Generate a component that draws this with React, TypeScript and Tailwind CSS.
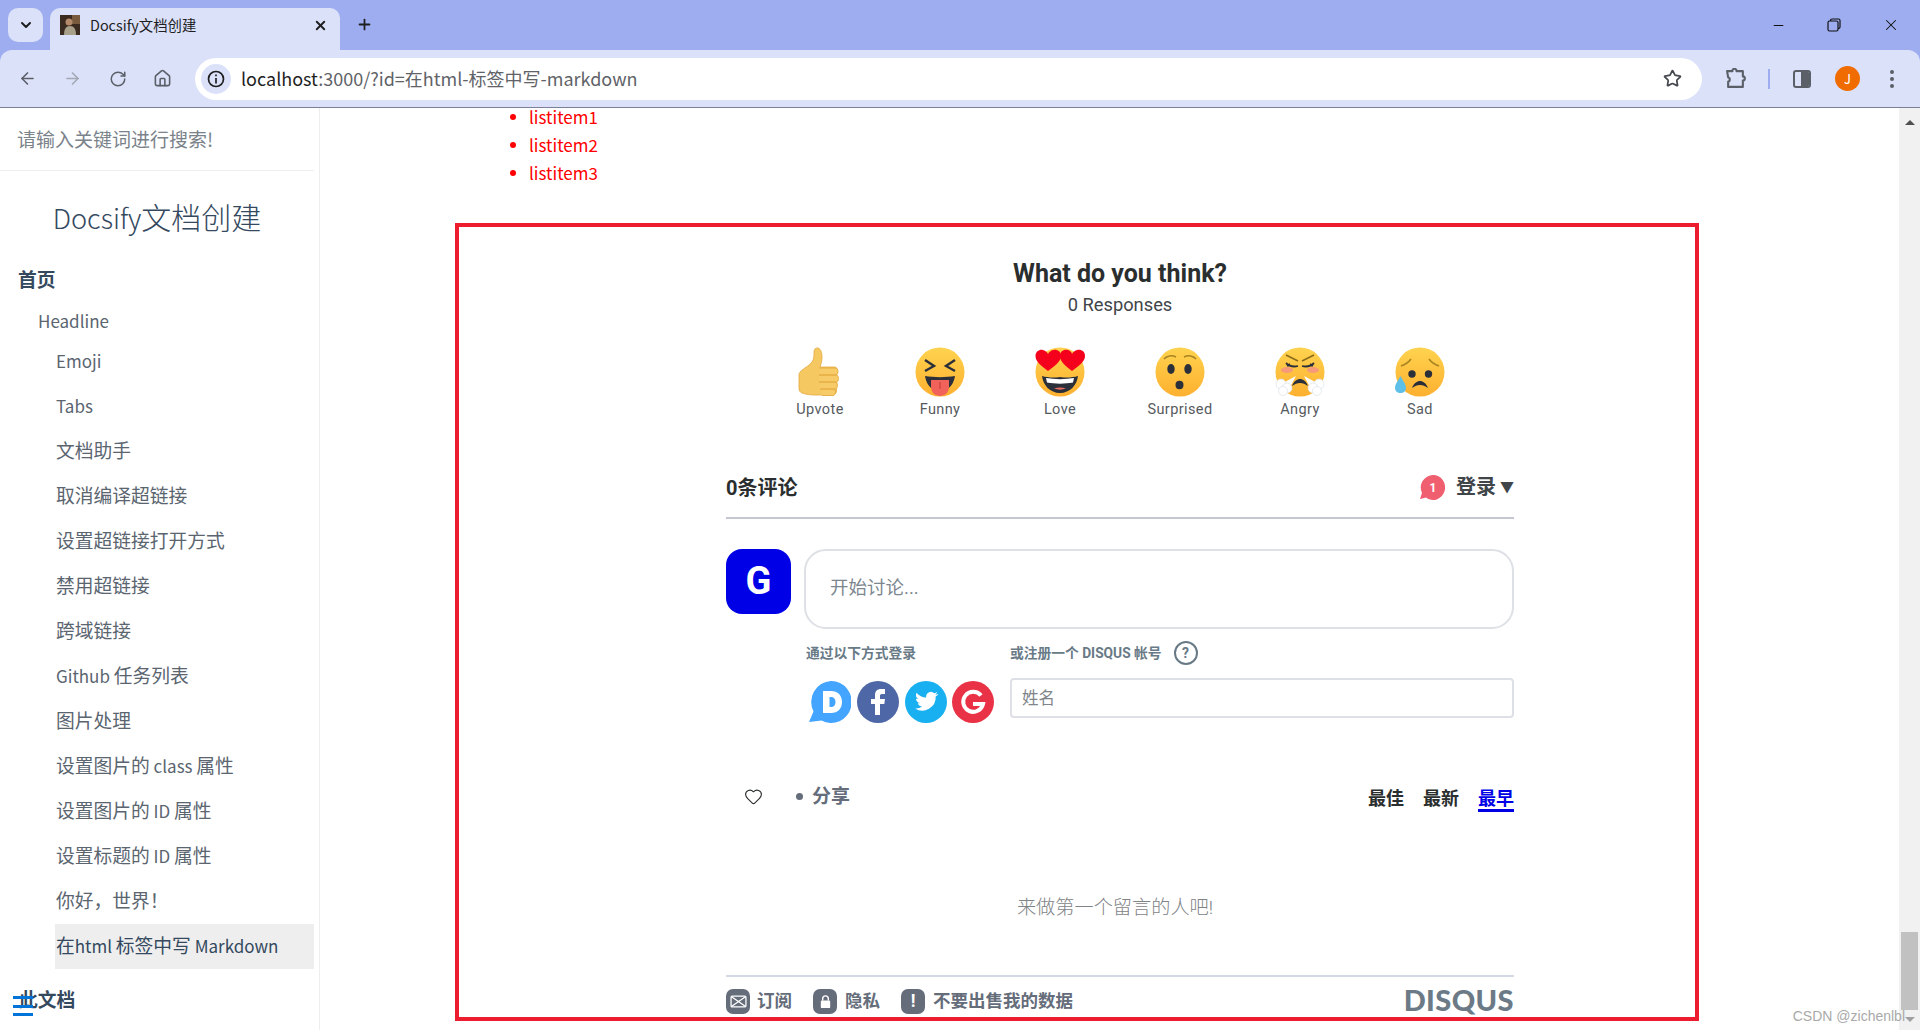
import { ArrowLeft, ArrowRight, ChevronDown, Heart, House, Minus, Plus, RotateCw, Star, X } from "lucide-react";

const SIDEBAR_ITEMS = [
  "Emoji",
  "Tabs",
  "文档助手",
  "取消编译超链接",
  "设置超链接打开方式",
  "禁用超链接",
  "跨域链接",
  "Github 任务列表",
  "图片处理",
  "设置图片的 class 属性",
  "设置图片的 ID 属性",
  "设置标题的 ID 属性",
  "你好，世界！",
];

// the CJK font's latin glyphs run wide, so latin runs get a smaller size
function Mixed({ text }: { text: string }) {
  return (
    <>
      {text.split(/([\x00-\x7f]+)/).map((part, index) =>
        index % 2 === 1 ? (
          <span key={index} className="text-[17px]">
            {part}
          </span>
        ) : (
          part
        )
      )}
    </>
  );
}

function Face({ children }: { children: React.ReactNode }) {
  return (
    <svg viewBox="0 0 50 50" className="h-[50px] w-[50px]">
      <defs>
        <linearGradient id="faceFill" x1="0" y1="0" x2="0" y2="1">
          <stop offset="0" stopColor="#ffd34f" />
          <stop offset="1" stopColor="#fdb02f" />
        </linearGradient>
      </defs>
      <circle cx="25" cy="25" r="24.5" fill="url(#faceFill)" />
      {children}
    </svg>
  );
}

function Upvote() {
  return (
    <svg viewBox="0 0 50 50" className="h-[50px] w-[50px]">
      <path
        d="M6 24c3-3 8-5 11-9 2-3 2-6 2-10 0-3 2-4.500 4-4 3 1 4 5 4 9 0 4-1 7-2 10h14c3 0 3.500 2 3 4l-.5 20c-.5 3-2 4-4 4H19c-5 0-9-1-12-2-2-1-3-2-3-5V28c0-2 1-3 2-4z"
        fill="#f5c862"
        stroke="#e3a83f"
        strokeWidth="0.8"
      />
      <path
        d="M24 21h16c2 0 3 1.500 3 3.500S42 28 40 28H24M24 28h17c1.800 0 2.500 1.500 2.500 3.500S42.800 35 41 35H24M24 35h16c1.800 0 2.500 1.500 2.500 3.200S41.800 42 40 42H25M26 42h12c1.500 0 2.500 1.200 2.500 3S39.500 48.500 38 48.500H27"
        fill="#f7cb68"
        stroke="#e3a83f"
        strokeWidth="0.8"
      />
    </svg>
  );
}

function Funny() {
  return (
    <Face>
      <path d="M10 13l9 6-9 5M40 13l-9 6 9 5" fill="none" stroke="#2b2f3a" strokeWidth="2.400" />
      <path d="M10 29c9 1.500 21 1.500 30 0-1 7-5 12-8 13H18c-3-1-7-6-8-13z" fill="#2b2f3a" />
      <path d="M16 33h18v7c0 5-4 9-9 9s-9-4-9-9z" fill="#f0625a" />
      <path d="M25 35v7" stroke="#c9413e" strokeWidth="1.200" />
    </Face>
  );
}

function Love() {
  return (
    <Face>
      <path d="M25 30c6 1 13 .5 18-1-1 9-8 17-18 17S8 38 7 29c5 1.500 12 2 18 1z" fill="#2b2f3a" />
      <path d="M11 31c9 1.500 19 1.500 28 0l-1 4.500c-8 1.500-18 1.500-26 0z" fill="#ffffff" />
      <path d="M19 41.500c4-1.500 8-1.500 12 0-4 1.500-8 1.500-12 0z" fill="#ea6b5f" />
      <path d="M13 24C7 19 .5 15 .5 9 .5 4 5 2 8 3c2 .5 4 2 5 4 1-2 3-3.500 5-4 4-1 8 1 8 6 0 6-7 10-13 15z" fill="#f4001d" />
      <path d="M37 24c-6-5-12-9-12-15 0-5 4-7 8-6 2 .5 3.500 2 4 4 1-2 3-3.500 5-4 4-1 8 1 8 6 0 6-7 10-13 15z" fill="#f4001d" />
    </Face>
  );
}

function Surprised() {
  return (
    <Face>
      <path d="M9 12c3-3.500 8-4 12-2M29 10c4-2 9-1.500 12 2" fill="none" stroke="#a98423" strokeWidth="1.600" />
      <ellipse cx="16" cy="22" rx="3.700" ry="5" fill="#2b2f3a" />
      <ellipse cx="33" cy="22" rx="3.700" ry="5" fill="#2b2f3a" />
      <ellipse cx="24.500" cy="38" rx="4" ry="4.200" fill="#2b2f3a" />
    </Face>
  );
}

function Angry() {
  return (
    <Face>
      <ellipse cx="12" cy="23" rx="6" ry="3" fill="#f79a7a" />
      <ellipse cx="38" cy="23" rx="6" ry="3" fill="#f79a7a" />
      <path d="M11 8l12 6M39 8l-12 6" fill="none" stroke="#8a6b1d" strokeWidth="1.500" />
      <path d="M11 16c3 3 8 4 12 3M39 16c-3 3-8 4-12 3M12 19l3-2M38 19l-3-2" fill="none" stroke="#2b2f3a" strokeWidth="1.800" />
      <path d="M21 29L8 36l6 6zM29 29l13 7-6 6z" fill="#ffffff" />
      <path d="M17 39c2-5 5-7 8-7s6 2 8 7c-3-2-5-3-8-3s-5 1-8 3z" fill="#2b2f3a" />
      <g fill="#ffffff" stroke="#d3dde0" strokeWidth="0.600">
        <circle cx="6" cy="37" r="5" />
        <circle cx="12" cy="41" r="5" />
        <circle cx="8" cy="44" r="4.500" />
        <circle cx="44" cy="37" r="5" />
        <circle cx="38" cy="41" r="5" />
        <circle cx="42" cy="44" r="4.500" />
      </g>
    </Face>
  );
}

function Sad() {
  return (
    <Face>
      <path d="M6 19c3-1 7-3 10-7M44 19c-3-1-7-3-10-7" fill="none" stroke="#a98423" strokeWidth="1.700" />
      <circle cx="17" cy="27" r="3.700" fill="#2b2f3a" />
      <circle cx="33.500" cy="27" r="3.700" fill="#2b2f3a" />
      <path d="M17 41c2-5 5-7 8-7s6 2 8 7c-3-2-5-3-8-3s-5 1-8 3z" fill="#2b2f3a" />
      <path d="M5.500 29C3 34 0 37 0 41c0 3 2.500 5 5.500 5s5.500-2 5.500-5c0-4-3-7-5.500-12z" fill="#5ec0e8" />
    </Face>
  );
}

const REACTIONS = [
  { label: "Upvote", icon: <Upvote /> },
  { label: "Funny", icon: <Funny /> },
  { label: "Love", icon: <Love /> },
  { label: "Surprised", icon: <Surprised /> },
  { label: "Angry", icon: <Angry /> },
  { label: "Sad", icon: <Sad /> },
];

function BrowserChrome() {
  return (
    <div className="flex-none bg-[#9dadf0] font-['Noto_Sans_CJK_SC',sans-serif]">
      <div className="flex h-[50px] items-end">
        <div className="mb-[8px] ml-[8px] flex h-[34px] w-[35px] items-center justify-center rounded-[10px] bg-[#dbe1f9]">
          <ChevronDown size={16} strokeWidth={3} className="text-[#1f1f1f]" />
        </div>
        <div className="ml-[7px] flex h-[42px] w-[290px] items-center rounded-t-[10px] bg-[#dbe1f9] pb-[8px] pl-[10px]">
          <svg viewBox="0 0 20 20" className="h-[20px] w-[20px]">
            <rect width="20" height="20" fill="#3a2a20" />
            <rect x="12" width="8" height="9" fill="#7a5a3c" />
            <path d="M4 20c0-6 2-9 6-9s6 3 6 9z" fill="#a8a089" />
            <circle cx="9" cy="7" r="3.500" fill="#b58a6a" />
          </svg>
          <span className="ml-[10px] text-[14.400px] text-[#1f1f1f]">Docsify文档创建</span>
          <X size={15} strokeWidth={3} className="ml-[117px] text-[#1f1f1f]" />
        </div>
        <div className="mb-[17px] ml-[16px] text-[#1f1f1f]">
          <Plus size={17} strokeWidth={2.500} />
        </div>
        <div className="mb-[8px] ml-auto flex h-[34px] items-center text-[#111111]">
          <Minus size={15} strokeWidth={1.600} />
          <svg viewBox="0 0 14 14" className="ml-[41px] h-[14px] w-[14px]" fill="none" stroke="#111111" strokeWidth="1.200">
            <rect x="1" y="3" width="10" height="10" rx="1.500" />
            <path d="M3.500 3V2.500C3.500 1.500 4 1 5 1h6.500C12.500 1 13 1.500 13 2.500V9c0 1-.5 1.500-1.500 1.500H11" />
          </svg>
          <X size={18} strokeWidth={1.400} className="ml-[41px] mr-[20px]" />
        </div>
      </div>
      <div className="flex h-[58px] items-center rounded-t-[12px] border-b border-[#7b8098] bg-[#dbe1f9]">
        <ArrowLeft size={19} strokeWidth={2} className="ml-[18px] text-[#5b5f68]" />
        <ArrowRight size={19} strokeWidth={2} className="ml-[26px] text-[#a4a8b4]" />
        <RotateCw size={18} strokeWidth={2} className="ml-[27px] text-[#5b5f68]" />
        <House size={19} strokeWidth={2} className="ml-[26px] text-[#5b5f68]" />
        <div className="ml-[23px] flex h-[42px] w-[1507px] items-center rounded-full bg-white pl-[6px]">
          <div className="flex h-[30px] w-[30px] items-center justify-center rounded-full bg-[#dbe1f9]">
            <svg viewBox="0 0 18 18" className="h-[18px] w-[18px]" fill="none" stroke="#1f1f1f" strokeWidth="1.700">
              <circle cx="9" cy="9" r="7.500" />
              <path d="M9 8v5.500M9 4.500v1.800" />
            </svg>
          </div>
          <span className="ml-[10px] whitespace-nowrap text-[18px] text-[#5f6368]">
            <span className="text-[#1f1f1f]">localhost</span>:3000/?id=在html-标签中写-markdown
          </span>
          <Star size={19} strokeWidth={2.200} className="ml-auto mr-[20px] text-[#45494f]" />
        </div>
        <svg viewBox="0 0 20 20" className="ml-[23px] h-[21px] w-[21px]" fill="none" stroke="#5b5f68" strokeWidth="2">
          <path d="M2 3h5c0-3 4-3 4 0h6v5c2.500 0 2.500 4 0 4v6H3v-5c2 0 2-4 0-4z" strokeLinejoin="round" />
        </svg>
        <div className="ml-[22px] h-[20px] w-[2px] bg-[#9dadf0]" />
        <div className="ml-[23px] flex h-[18px] w-[18px] overflow-hidden rounded-[3px] border-2 border-[#5b5f68]">
          <div className="flex-1" />
          <div className="w-[8px] bg-[#5b5f68]" />
        </div>
        <div className="ml-[24px] flex h-[25px] w-[25px] items-center justify-center rounded-full bg-[#f06c00] text-[13px] text-white">
          J
        </div>
        <div className="ml-[30px] flex flex-col gap-[3px]">
          <div className="h-[4px] w-[4px] rounded-full bg-[#5b5f68]" />
          <div className="h-[4px] w-[4px] rounded-full bg-[#5b5f68]" />
          <div className="h-[4px] w-[4px] rounded-full bg-[#5b5f68]" />
        </div>
      </div>
    </div>
  );
}

function Sidebar() {
  return (
    <aside className="relative w-[320px] flex-none overflow-hidden border-r border-[#eeeeee] font-['Noto_Sans_CJK_SC',sans-serif] text-[18.750px] text-[#5a6570]">
      <div className="mr-[5px] flex h-[63px] items-center border-b border-[#eeeeee] pl-[17px] text-[19px] text-[#7a828a]">
        请输入关键词进行搜索!
      </div>
      <div className="mr-[5px] mt-[22px] h-[46px] text-center text-[30px] font-light leading-[46px] text-[#34495e]">
        <span className="text-[27.200px]">Docsify</span>文档创建
      </div>
      <div className="ml-[18px] mt-[21px] h-[38px] font-bold leading-[38px] text-[#34495e]">首页</div>
      <div className="ml-[38px] h-[41px] pt-[4px] leading-[35px]">
        <Mixed text="Headline" />
      </div>
      <div className="ml-[56px] mr-[5px]">
        {SIDEBAR_ITEMS.map((item) => (
          <div key={item} className="h-[45px] leading-[42px]">
            <Mixed text={item} />
          </div>
        ))}
        <div className="-ml-px h-[45px] bg-[#eeeeee] pl-px leading-[42px] text-[#34495e]">
          <Mixed text="在html 标签中写 Markdown" />
        </div>
      </div>
      <div className="ml-[19px] mt-[16px] h-[28px] font-bold leading-[28px] text-[#34495e]">此文档</div>
      <div className="absolute left-[13px] top-[888px] flex w-[20px] flex-col gap-[5.500px]">
        <div className="h-[3px] bg-[#0074d9]" />
        <div className="h-[3px] bg-[#0074d9]" />
        <div className="h-[3px] bg-[#0074d9]" />
      </div>
    </aside>
  );
}

function SocialIcons() {
  return (
    <div className="ml-[3px] mt-[3px] flex gap-[5.800px]">
      <svg viewBox="0 0 42 42" className="h-[42px] w-[42px]">
        <path d="M22 0a20.500 21 0 1 1-9.500 39.500L0 41l4.500-10.500A21 21 0 0 1 22 0z" fill="#43a5ff" />
        <path d="M14 10h8c7 0 11 4.500 11 11s-4 11-11 11h-8zm6.500 6v10H22c3 0 4.500-2 4.500-5s-1.500-5-4.500-5z" fill="#fff" fillRule="evenodd" />
      </svg>
      <svg viewBox="0 0 42 42" className="h-[42px] w-[42px]">
        <circle cx="21" cy="21" r="21" fill="#4e67a6" />
        <path d="M18 34V23h-4v-5h4v-4c0-4 2.500-6 6-6h4v5h-3c-1.500 0-2 .7-2 2v3h5l-.7 5H23v11z" fill="#fff" />
      </svg>
      <svg viewBox="0 0 42 42" className="h-[42px] w-[42px]">
        <circle cx="21" cy="21" r="21" fill="#18b0f0" />
        <path d="M33 13c-1 .4-1.800.6-2.800.7 1-.6 1.700-1.500 2.100-2.600-1 .6-2 1-3 1.200a4.700 4.700 0 0 0-8 4.300c-4-.2-7.400-2-9.700-4.900-1.300 2.200-.6 5 1.500 6.300-.8 0-1.500-.2-2.100-.6 0 2.300 1.600 4.200 3.800 4.700-.7.200-1.400.2-2.100.1.600 1.900 2.300 3.200 4.400 3.300a9.500 9.500 0 0 1-7 2 13.400 13.400 0 0 0 20.600-11.900c1-.7 1.800-1.500 2.800-2.600z" fill="#fff" />
      </svg>
      <svg viewBox="0 0 42 42" className="h-[42px] w-[42px]">
        <circle cx="21" cy="21" r="21" fill="#e93246" />
        <path d="M29 14.500A10 10 0 1 0 31 23H21" fill="none" stroke="#fff" strokeWidth="4" />
      </svg>
    </div>
  );
}

function FooterBadge({ children }: { children: React.ReactNode }) {
  return (
    <div className="flex h-[25px] w-[24px] items-center justify-center rounded-[7px] bg-[#656c7a] font-bold text-white">{children}</div>
  );
}

function DisqusPanel() {
  return (
    <div className="ml-[135px] mt-[36px] h-[798px] w-[1244px] flex-none overflow-hidden border-4 border-[#ed1c2e] font-[Roboto,'Noto_Sans_CJK_SC',sans-serif]">
      <div className="ml-[267px] w-[788px]">
        <div className="pt-[29px] text-center">
          <div className="h-[35px] text-[25px] font-bold leading-[36px] text-[#2a2e2e]">What do you think?</div>
          <div className="h-[28px] text-[18.300px] leading-[28px] text-[#3f4549]">0 Responses</div>
        </div>
        <div className="mx-[34px] mt-[28px] grid grid-cols-6">
          {REACTIONS.map((reaction) => (
            <div key={reaction.label} className="flex flex-col items-center">
              {reaction.icon}
              <div className="mt-[3px] h-[20px] text-[14.500px] leading-[20px] tracking-[0.4px] text-[#565a5e]">{reaction.label}</div>
            </div>
          ))}
        </div>

        <div className="mt-[47px] flex h-[40px] items-center justify-between text-[20px] font-bold text-[#2a2e2e]">
          <span className="pt-[2px]">0条评论</span>
          <div className="flex items-center text-[#3f4549]">
            <svg viewBox="0 0 25 25" className="h-[25px] w-[25px]">
              <path d="M13 0a12 12.500 0 1 1-7 22.600L0 24l2-6A12.500 12.500 0 0 1 13 0z" fill="#f05f70" />
              <text x="13" y="17" textAnchor="middle" fontSize="12" fontWeight="700" fill="#fff">1</text>
            </svg>
            <span className="ml-[11px]">登录</span>
            <span className="ml-[4px] text-[14px]">▼</span>
          </div>
        </div>
        <div className="mt-[10px] h-[2px] bg-[#c5c7d0]" />

        <div className="mt-[30px] flex items-start">
          <div className="flex h-[65px] w-[65px] items-center justify-center rounded-[16px] bg-[#0000e6] text-[38px] font-bold text-white">G</div>
          <div className="ml-[13px] flex h-[80px] flex-1 items-center rounded-[22px] border-2 border-[#dde0e5] pl-[24px] text-[18.500px] text-[#7d8790]">
            开始讨论...
          </div>
        </div>
        <div className="ml-[80px] mt-[12px] flex h-[24px] items-center text-[13.750px] font-bold text-[#687a86]">
          <span className="w-[204px]">通过以下方式登录</span>
          <span>或注册一个 DISQUS 帐号</span>
          <span className="ml-[12px] flex h-[24px] w-[24px] items-center justify-center rounded-full border-2 border-[#687a86] text-[14px] leading-none">?</span>
        </div>
        <div className="ml-[80px] mt-[13px] flex h-[45px] items-start">
          <div className="w-[204px]">
            <SocialIcons />
          </div>
          <div className="flex h-[40px] flex-1 items-center rounded-[4px] border-2 border-[#dde0e5] pl-[10px] pt-[3px] text-[16.500px] text-[#7f858a]">姓名</div>
        </div>

        <div className="mt-[55px] flex h-[34px] items-start justify-between">
          <div className="flex h-[36px] items-center text-[#656c7a]">
            <Heart size={19} strokeWidth={1.400} className="ml-[18px] text-[#2a2e2e]" />
            <div className="ml-[33px] h-[7px] w-[7px] rounded-full bg-[#656c7a]" />
            <span className="ml-[9px] pt-[2px] text-[19px] font-bold">分享</span>
          </div>
          <div className="flex gap-[19px] text-[18px] font-bold text-[#2a2e2e]">
            <span className="h-[34px] leading-[41px]">最佳</span>
            <span className="h-[34px] leading-[41px]">最新</span>
            <span className="h-[34px] border-b-[3px] border-[#0000e6] leading-[41px] text-[#0000e6]">最早</span>
          </div>
        </div>

        <div className="mt-[81px] h-[30px] pr-[10px] text-center text-[19.200px] font-light leading-[30px] text-[#7f8487]">来做第一个留言的人吧!</div>
        <div className="mt-[52px] h-[2px] bg-[#d5d9e5]" />
        <div className="mt-[12px] flex h-[25px] items-center text-[17.500px] font-bold text-[#656c7a]">
          <FooterBadge>
            <svg viewBox="0 0 16 16" className="h-[17px] w-[17px]" fill="none" stroke="#fff" strokeWidth="1.200">
              <rect x="1" y="3" width="14" height="10" rx="1" />
              <path d="M1.500 3.500L15 13M14.500 3.500L1 13" />
            </svg>
          </FooterBadge>
          <span className="ml-[7px]">订阅</span>
          <div className="ml-[21px]">
            <FooterBadge>
              <svg viewBox="0 0 16 16" className="h-[15px] w-[15px]">
                <rect x="3" y="7" width="10" height="8" rx="1" fill="#fff" />
                <path d="M5 7V5a3 3 0 0 1 6 0v2" fill="none" stroke="#fff" strokeWidth="1.500" />
              </svg>
            </FooterBadge>
          </div>
          <span className="ml-[8px]">隐私</span>
          <div className="ml-[21px]">
            <FooterBadge>!</FooterBadge>
          </div>
          <span className="ml-[8px]">不要出售我的数据</span>
          <span className="ml-auto pb-[4px] font-[Lato,sans-serif] text-[29px] font-black tracking-[0.4px] text-[#6b7a86]">DISQUS</span>
        </div>
      </div>
    </div>
  );
}

export default function App() {
  return (
    <div className="relative flex h-[1030px] w-[1920px] flex-col overflow-hidden bg-white">
      <BrowserChrome />
      <div className="flex min-h-0 flex-1">
        <Sidebar />
        <main className="flex min-w-0 flex-1 flex-col overflow-hidden">
          <ul className="-mt-[5px] ml-[190px] flex-none font-['Noto_Sans_CJK_SC',sans-serif] text-[17px] leading-[28px] text-[#ff0000]">
            {["listitem1", "listitem2", "listitem3"].map((item) => (
              <li key={item} className="flex items-center">
                <span className="mr-[13px] h-[6px] w-[6px] rounded-full bg-[#ff0000]" />
                <span>{item}</span>
              </li>
            ))}
          </ul>
          <DisqusPanel />
        </main>
        <div className="flex w-[21px] flex-none flex-col items-center bg-[#f1f1f1]">
          <div className="mt-[12px] h-0 w-0 border-x-[5px] border-b-[5px] border-x-transparent border-b-[#505050]" />
          <div className="mt-[807px] h-[78px] w-[17px] bg-[#c1c1c1]" />
          <div className="mt-[7px] h-0 w-0 border-x-[5px] border-t-[5px] border-x-transparent border-t-[#a0a0a0]" />
        </div>
      </div>
      <div className="absolute right-[15px] top-[1006px] font-['Liberation_Sans',sans-serif] text-[14px] text-[#a9a9a9]">CSDN @zichenlbl</div>
    </div>
  );
}
